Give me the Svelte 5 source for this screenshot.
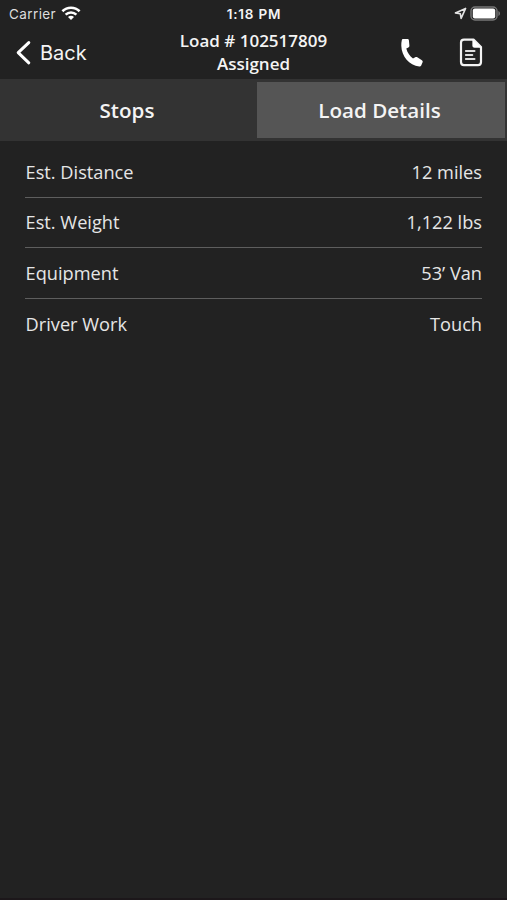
<script>
  const loadNumber = "102517809";
  const status = "Assigned";

  let activeTab = $state("details");

  const tabs = [
    { id: "stops", label: "Stops" },
    { id: "details", label: "Load Details" },
  ];

  const details = [
    { label: "Est. Distance", value: "12 miles" },
    { label: "Est. Weight", value: "1,122 lbs" },
    { label: "Equipment", value: "53’ Van" },
    { label: "Driver Work", value: "Touch" },
  ];
</script>

<div class="screen">
  <div class="status-bar">
    <div class="carrier">
      <span class="carrier-name">Carrier</span>
      <svg width="20" height="16" viewBox="0 0 20 16" fill="none">
        <path d="M1.4 5.2C6.2 .5 13.8 .5 18.6 5.2" stroke="#fff" stroke-width="2.6" />
        <path d="M4.6 8.6C7.7 5.7 12.3 5.7 15.4 8.6" stroke="#fff" stroke-width="2.5" />
        <path d="M7 10.9C8.7 9.3 11.3 9.3 13 10.9L10 14Z" fill="#fff" />
      </svg>
    </div>
    <span class="time">1:18 PM</span>
    <div class="indicators">
      <svg width="13" height="13" viewBox="0 0 13 13" fill="none">
        <path
          d="M11.6 1.4L1.4 5.9L6.3 6.7L7.1 11.4Z"
          stroke="#e4e4e4"
          stroke-width="1.6"
          stroke-linejoin="round"
        />
      </svg>
      <svg width="31" height="15" viewBox="0 0 31 15" fill="none">
        <rect x="1" y="1" width="26" height="13" rx="4" stroke="#777" stroke-width="1.4" />
        <rect x="2.8" y="2.6" width="22.4" height="9.8" rx="2" fill="#fff" />
        <path d="M28.4 5C30.5 6 30.5 9 28.4 10Z" fill="#777" />
      </svg>
    </div>
  </div>

  <header class="nav">
    <button class="back" aria-label="Back">
      <svg width="16" height="26" viewBox="0 0 16 26" fill="none">
        <path
          d="M13.8 2.6L3.2 12.6L13.8 22.8"
          stroke="#fff"
          stroke-width="3"
          stroke-linecap="round"
          stroke-linejoin="round"
        />
      </svg>
      <span>Back</span>
    </button>
    <h1>Load # {loadNumber}<br />{status}</h1>
    <div class="actions">
      <button aria-label="Call">
        <svg width="24" height="30" viewBox="0 0 24 30">
          <path
            d="M3.2 1.1L7.2 .9C8.2 .9 8.8 1.4 8.9 2.3L9.4 7.6C9.5 8.5 9.1 9.1 8.4 9.5L6.3 10.6C7.3 14.6 9.7 18 13 20.6L15.2 19.3C15.9 18.9 16.6 18.9 17.3 19.3L21.9 22.2C22.7 22.7 22.9 23.4 22.6 24.2L21.2 27.4C20.8 28.2 20.2 28.5 19.3 28.4C9.2 27.2 1.6 18.4 1.3 7.7C1.2 5.8 1.4 4 1.8 2.3C2 1.5 2.4 1.1 3.2 1.1Z"
            fill="#fff"
          />
        </svg>
      </button>
      <button aria-label="Documents">
        <svg width="24" height="30" viewBox="0 0 24 30" fill="none">
          <path
            d="M5 1.6H14.5L22 9.1V24.1C22 26 20.9 27.2 19 27.2H5C3.1 27.2 2 26 2 24.1V4.6C2 2.7 3.1 1.6 5 1.6Z"
            stroke="#f4f4f4"
            stroke-width="2.2"
            stroke-linejoin="round"
          />
          <path d="M13.4 1.6L22 9.8H15.6C14.2 9.8 13.4 9 13.4 7.6Z" fill="#fff" />
          <path
            d="M6.8 13H15.6M6.8 17H13.4M6.8 21H15.6"
            stroke="#ddd"
            stroke-width="1.8"
            stroke-linecap="round"
          />
        </svg>
      </button>
    </div>
  </header>

  <nav class="tabs">
    {#each tabs as tab}
      <button
        class="tab"
        class:active={activeTab === tab.id}
        onclick={() => (activeTab = tab.id)}
      >
        {tab.label}
      </button>
    {/each}
  </nav>

  {#if activeTab === "details"}
    <ul class="details">
      {#each details as item}
        <li>
          <span class="label">{item.label}</span>
          <span>{item.value}</span>
        </li>
      {/each}
    </ul>
  {/if}
</div>

<style>
  :global(body) {
    margin: 0;
    background: #222;
  }

  .screen {
    box-sizing: border-box;
    height: 900px;
    background: #222;
    border-bottom: 2px solid #1c171a;
    color: #f4f4f4;
    font-family: "Open Sans", sans-serif;
    overflow: hidden;
  }

  button {
    padding: 0;
    border: none;
    background: none;
    color: inherit;
    font-family: inherit;
    cursor: pointer;
  }

  svg {
    display: block;
  }

  .status-bar {
    display: grid;
    grid-template-columns: 1fr auto 1fr;
    align-items: center;
    height: 27px;
    padding: 0 6px 0 9px;
    font-family: Inter, sans-serif;
    font-size: 13.5px;
  }

  .carrier,
  .indicators {
    display: flex;
    align-items: center;
  }

  .carrier {
    gap: 5px;
    color: #ddd;
  }

  .carrier-name {
    letter-spacing: 0.4px;
  }

  .time {
    margin: 0 1px 0 -1px;
    font-weight: 600;
    letter-spacing: 0.8px;
  }

  .indicators {
    justify-content: flex-end;
    gap: 3px;
  }

  .nav {
    display: grid;
    grid-template-columns: 1fr auto 1fr;
    align-items: center;
    height: 52px;
    padding: 0 24px 0 15px;
  }

  .back {
    display: flex;
    align-items: center;
    gap: 9px;
    margin-right: 9px;
    font-family: Inter, sans-serif;
    font-size: 20px;
  }

  h1 {
    margin: 0 -4.5px 2px 4.5px;
    font-size: 17px;
    font-weight: 600;
    line-height: 23px;
    text-align: center;
  }

  .actions {
    display: flex;
    justify-content: flex-end;
    gap: 35px;
  }

  .tabs {
    display: grid;
    grid-template-columns: 254px 1fr;
    gap: 3px;
    box-sizing: border-box;
    height: 62px;
    padding: 3px 2px 3px 0;
    background: #333;
  }

  .tab {
    font-size: 20.6px;
    font-weight: 600;
  }

  .tab.active {
    padding-right: 3px;
    background: #555;
  }

  .details {
    margin: 0;
    padding: 6px 25px 0;
    list-style: none;
    font-size: 18.2px;
    color: #e6e6e6;
  }

  .details li {
    display: flex;
    align-items: center;
    justify-content: space-between;
    box-sizing: border-box;
    height: 50.5px;
    border-bottom: 1.5px solid #5e5e5e;
  }

  .details li:first-child {
    padding-top: 1px;
  }

  .details li:last-child {
    border-bottom: none;
  }

  .label {
    padding-left: 0.6px;
  }
</style>
